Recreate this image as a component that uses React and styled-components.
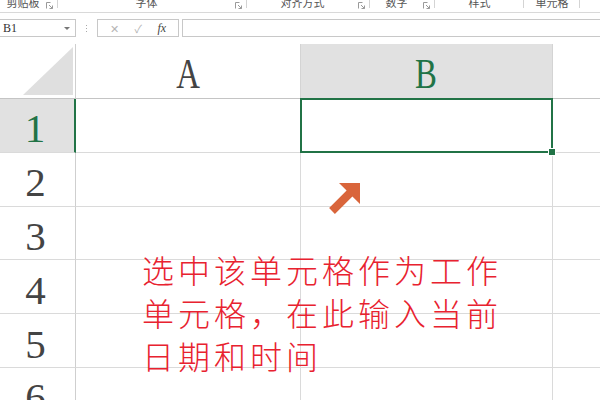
import React from "react";
import styled, { createGlobalStyle } from "styled-components";

const GlobalStyle = createGlobalStyle`
  html, body {
    margin: 0;
    padding: 0;
    background: #ffffff;
    width: 600px;
    height: 400px;
    overflow: hidden;
  }
  * {
    box-sizing: border-box;
  }
`;

const Page = styled.div`
  position: relative;
  width: 600px;
  height: 400px;
  overflow: hidden;
  font-family: "Noto Sans CJK SC", "Noto Sans", sans-serif;
`;

const Ribbon = styled.div`
  display: flex;
  height: 13px;
  border-bottom: 1px solid #d9d9d9;
  overflow: hidden;
`;

const Group = styled.div`
  position: relative;
  display: flex;
  width: ${({ $w }) => $w}px;
  flex: none;
  &::after {
    content: "";
    position: absolute;
    right: 0;
    top: 0;
    height: 8px;
    border-right: 1px solid #d4d4d4;
  }
`;

const GroupLabel = styled.span`
  flex: 1;
  text-align: center;
  font-size: 11px;
  line-height: 11px;
  margin-top: -3px;
  color: #555;
`;

const Launcher = styled.span`
  width: 12px;
  flex: none;
  display: flex;
  align-items: flex-start;
  padding-top: 2px;
`;

const FormulaBar = styled.div`
  display: flex;
  align-items: center;
  height: 18px;
  margin-top: 6px;
`;

const NameBox = styled.div`
  display: flex;
  align-items: center;
  justify-content: space-between;
  width: 76px;
  height: 18px;
  border: 1px solid #c8c8c8;
  border-left: none;
  padding: 0 5px 0 3px;
  font-family: "Liberation Serif", serif;
  font-size: 12px;
  color: #333;
`;

const Caret = styled.span`
  width: 0;
  height: 0;
  border-left: 3px solid transparent;
  border-right: 3px solid transparent;
  border-top: 3px solid #777;
`;

const Dots = styled.div`
  display: flex;
  flex-direction: column;
  gap: 2px;
  margin: 0 10px;
  span {
    width: 1px;
    height: 1px;
    background: #aaa;
  }
`;

const FxBox = styled.div`
  display: flex;
  align-items: center;
  justify-content: space-around;
  width: 82px;
  height: 18px;
  border: 1px solid #c8c8c8;
  padding: 0 4px;
  color: #b5b5b5;
  font-size: 11px;
`;

const FxText = styled.span`
  font-family: "Liberation Serif", serif;
  font-style: italic;
  color: #444;
  font-size: 12px;
`;

const Input = styled.div`
  flex: 1;
  height: 18px;
  margin-left: 3px;
  border: 1px solid #c8c8c8;
  border-right: none;
`;

const Sheet = styled.div`
  display: grid;
  grid-template-columns: 76px 225px 252px 1fr;
  grid-template-rows: 55px repeat(6, 53.8px);
  margin-top: 7px;
`;

const Corner = styled.div`
  position: relative;
  border-right: 1px solid #cfcfcf;
  border-bottom: 1px solid #c4c4c4;
  svg {
    position: absolute;
    right: 2px;
    bottom: 3px;
  }
`;

const ColHeader = styled.div`
  display: flex;
  align-items: center;
  justify-content: center;
  padding-top: 6px;
  background: ${({ $active }) => ($active ? "#e1e1e1" : "#ffffff")};
  color: ${({ $active }) => ($active ? "#217346" : "#444")};
  border-right: ${({ $last }) => ($last ? "none" : "1px solid #d4d4d4")};
  border-bottom: 1px solid #c4c4c4;
  font-family: "Liberation Serif", serif;
  font-size: 42px;
  span {
    display: inline-block;
    transform: scaleX(0.78);
  }
`;

const RowHeader = styled.div`
  display: flex;
  align-items: center;
  justify-content: center;
  padding-top: 6px;
  padding-right: 4px;
  background: ${({ $active }) => ($active ? "#e1e1e1" : "#ffffff")};
  color: ${({ $active }) => ($active ? "#217346" : "#444")};
  border-right: ${({ $active }) => ($active ? "2px solid #217346" : "1px solid #cfcfcf")};
  border-bottom: 1px solid #dadada;
  font-family: "Liberation Serif", serif;
  font-size: 41px;
`;

const Cell = styled.div`
  position: relative;
  border-right: ${({ $last }) => ($last ? "none" : "1px solid #dadada")};
  border-bottom: 1px solid #dadada;
  ${({ $selected }) =>
    $selected &&
    `
    &::before {
      content: "";
      position: absolute;
      left: -1px;
      top: -1px;
      right: -1px;
      bottom: -1px;
      border: 2px solid #217346;
      z-index: 1;
    }
    &::after {
      content: "";
      position: absolute;
      right: -4px;
      bottom: -4px;
      width: 6px;
      height: 6px;
      background: #217346;
      border: 1px solid #fff;
      z-index: 2;
    }
  `}
`;

const Note = styled.div`
  position: absolute;
  left: 142px;
  top: 248px;
  font-family: "Noto Sans CJK SC", sans-serif;
  font-weight: 300;
  font-size: 32px;
  line-height: 43px;
  letter-spacing: 4px;
  color: #e8222f;
  white-space: pre;
`;

const Arrow = styled.svg`
  position: absolute;
  left: 325px;
  top: 180px;
`;

const LauncherIcon = () => (
  <svg width="7" height="7" viewBox="0 0 7 7">
    <path d="M0.5 6.5V0.5H4.5" fill="none" stroke="#9a9a9a" strokeWidth="1" />
    <path d="M3 3L6.5 6.5M6.5 3.5V6.5H3.5" fill="none" stroke="#9a9a9a" strokeWidth="1" />
  </svg>
);

const groups = [
  { label: "剪贴板", w: 58, launcher: true },
  { label: "字体", w: 189, launcher: true },
  { label: "对齐方式", w: 123, launcher: true },
  { label: "数字", w: 65, launcher: true },
  { label: "样式", w: 89, launcher: false },
  { label: "单元格", w: 56, launcher: false },
];

const cols = ["A", "B"];
const rows = [1, 2, 3, 4, 5, 6];

export default function App() {
  return (
    <Page>
      <GlobalStyle />
      <Ribbon>
        {groups.map((g) => (
          <Group key={g.label} $w={g.w}>
            <GroupLabel>{g.label}</GroupLabel>
            {g.launcher ? (
              <Launcher>
                <LauncherIcon />
              </Launcher>
            ) : null}
          </Group>
        ))}
      </Ribbon>

      <FormulaBar>
        <NameBox>
          B1
          <Caret />
        </NameBox>
        <Dots>
          <span />
          <span />
          <span />
        </Dots>
        <FxBox>
          <span>✕</span>
          <span>✓</span>
          <FxText>fx</FxText>
        </FxBox>
        <Input />
      </FormulaBar>

      <Sheet>
        <Corner>
          <svg width="50" height="48" viewBox="0 0 50 48">
            <polygon points="50,0 50,48 0,48" fill="#dfdfdf" />
          </svg>
        </Corner>
        {cols.map((c) => (
          <ColHeader key={c} $active={c === "B"}>
            <span>{c}</span>
          </ColHeader>
        ))}
        <ColHeader $last />
        {rows.map((r) => (
          <React.Fragment key={r}>
            <RowHeader $active={r === 1}>{r}</RowHeader>
            <Cell />
            <Cell $selected={r === 1} />
            <Cell $last />
          </React.Fragment>
        ))}
      </Sheet>

      <Arrow width="40" height="40" viewBox="0 0 40 40">
        <polygon
          points="14,3 35,3 35,24 27.4,16.4 9.9,33.9 4.1,28.1 21.6,10.6"
          fill="#d9653b"
        />
      </Arrow>

      <Note>{"选中该单元格作为工作\n单元格，在此输入当前\n日期和时间"}</Note>
    </Page>
  );
}
